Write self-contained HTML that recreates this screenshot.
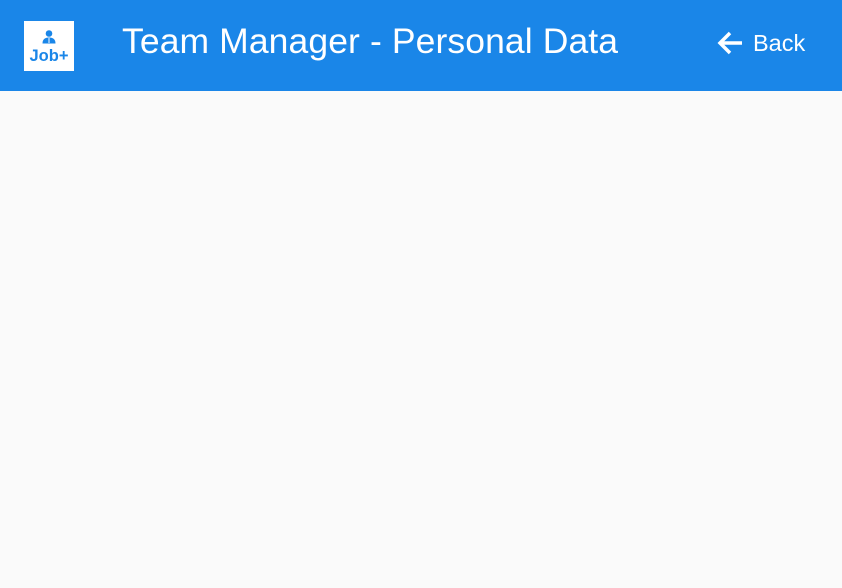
<!DOCTYPE html>
<html><head><style>
body{margin:0;width:842px;height:588px;background:#fafafa;font-family:"Liberation Sans",sans-serif;overflow:hidden}
.bar{position:absolute;left:0;top:0;width:842px;height:91px;background:#1a86e8}
.logo{position:absolute;left:24px;top:21px;width:50px;height:50px;background:#fff}
.logo span{position:absolute;left:0;width:50px;top:26px;text-align:center;color:#1a86e8;font-weight:bold;font-size:16.5px}
.title{position:absolute;left:122px;top:21px;color:#fff;font-size:35.5px;line-height:40px;letter-spacing:0.1px}
.back{position:absolute;left:753px;top:30px;color:#fff;font-size:23.5px;line-height:26px}
</style></head><body>
<div class="bar">
<div class="logo">
<svg width="50" height="26" style="position:absolute;left:0;top:0"><circle cx="25" cy="12.5" r="3.3" fill="#1a86e8"/><path d="M18.5 22.5 q0-6 6.5-6 q6.5 0 6.5 6z" fill="#1a86e8"/><path d="M25 17v5" stroke="#fff" stroke-width="1"/></svg>
<span>Job+</span></div>
<div class="title">Team Manager - Personal Data</div>
<svg style="position:absolute;left:716px;top:29px" width="28" height="28" viewBox="0 0 28 28"><path d="M26 14H4M14 4L4 14l10 10" stroke="#fff" stroke-width="3.5" fill="none"/></svg>
<div class="back">Back</div>
</div>
</body></html>
